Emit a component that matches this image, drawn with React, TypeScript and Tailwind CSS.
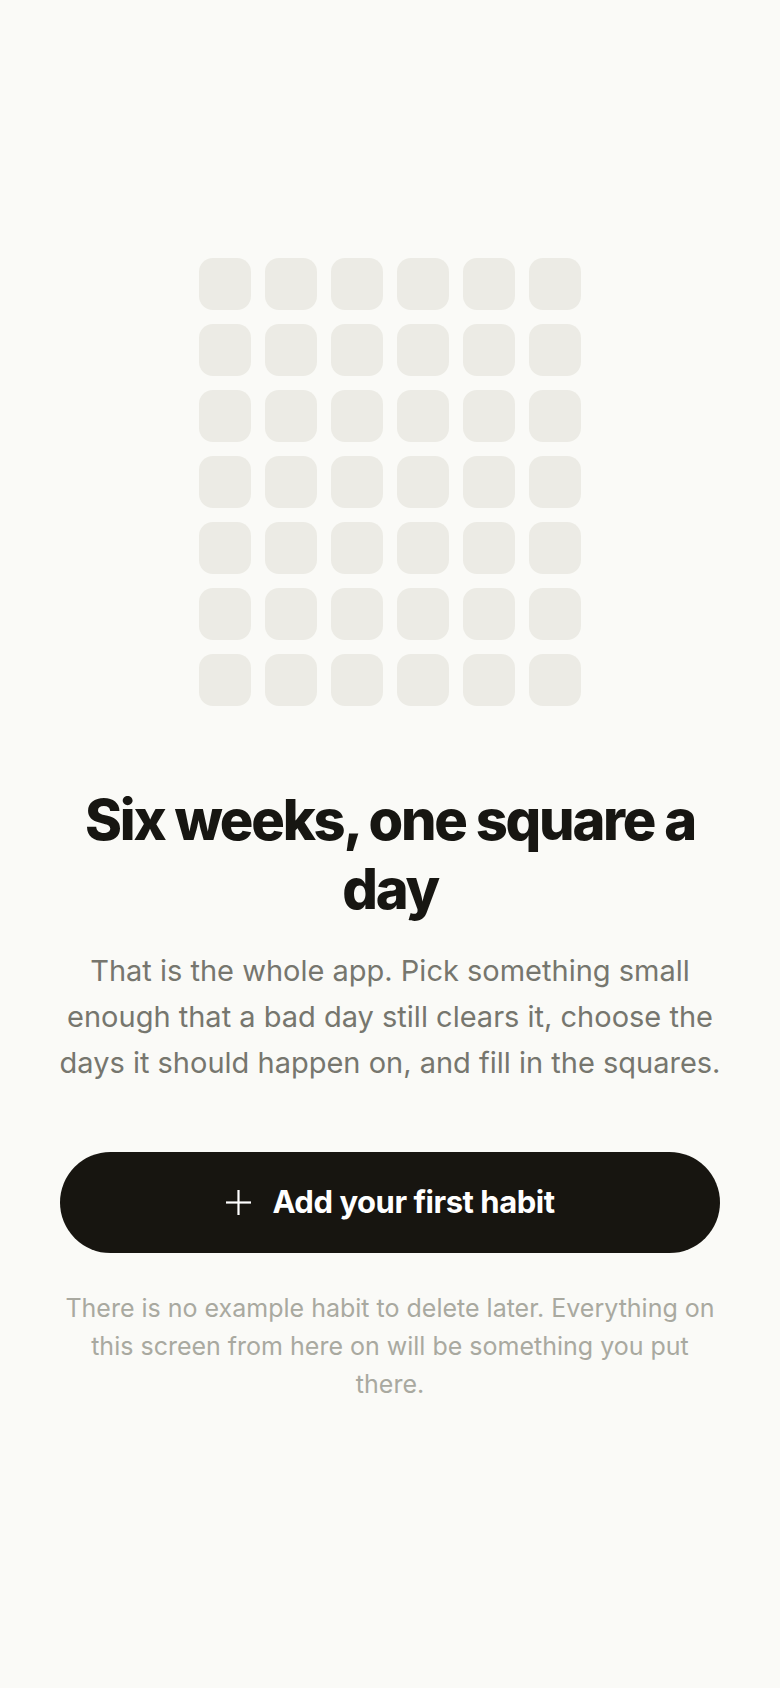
import React from "react";

export default function App() {
  const cells = Array.from({ length: 42 });
  return (
    <div
      className="min-h-screen w-full bg-[#FAFAF7] flex flex-col items-center justify-center pb-[28px] px-[60px]"
      style={{ fontFamily: "Inter, 'Noto Sans', sans-serif" }}
    >
      <div className="grid grid-cols-6 gap-[14px]">
        {cells.map((_, i) => (
          <div key={i} className="w-[52px] h-[52px] rounded-[14px] bg-[#ECEBE5]" />
        ))}
      </div>

      <h1 className="mt-[80px] text-center text-[56px] leading-[69px] font-extrabold tracking-[-0.04em] text-[#171612]">
        Six weeks, one square a day
      </h1>

      <p className="mt-[24px] -mx-[12px] text-center text-[29px] leading-[46px] text-[#76766E]">
        That is the whole app. Pick something small enough that a bad day still clears it, choose the days it should happen on, and fill in the squares.
      </p>

      <button className="mt-[66px] w-full h-[101px] rounded-full bg-[#171510] flex items-center justify-center gap-[20px] text-white">
        <svg width="27" height="27" viewBox="0 0 27 27" fill="none" stroke="currentColor" strokeWidth="2.2" strokeLinecap="butt">
          <path d="M1 13.5h25" />
          <path d="M13.5 1v25" />
        </svg>
        <span className="text-[31px] font-bold tracking-[-0.015em]">Add your first habit</span>
      </button>

      <p className="mt-[36px] text-center text-[25px] leading-[38px] text-[#A9A9A0]">
        There is no example habit to delete later. Everything on this screen from here on will be something you put there.
      </p>
    </div>
  );
}
